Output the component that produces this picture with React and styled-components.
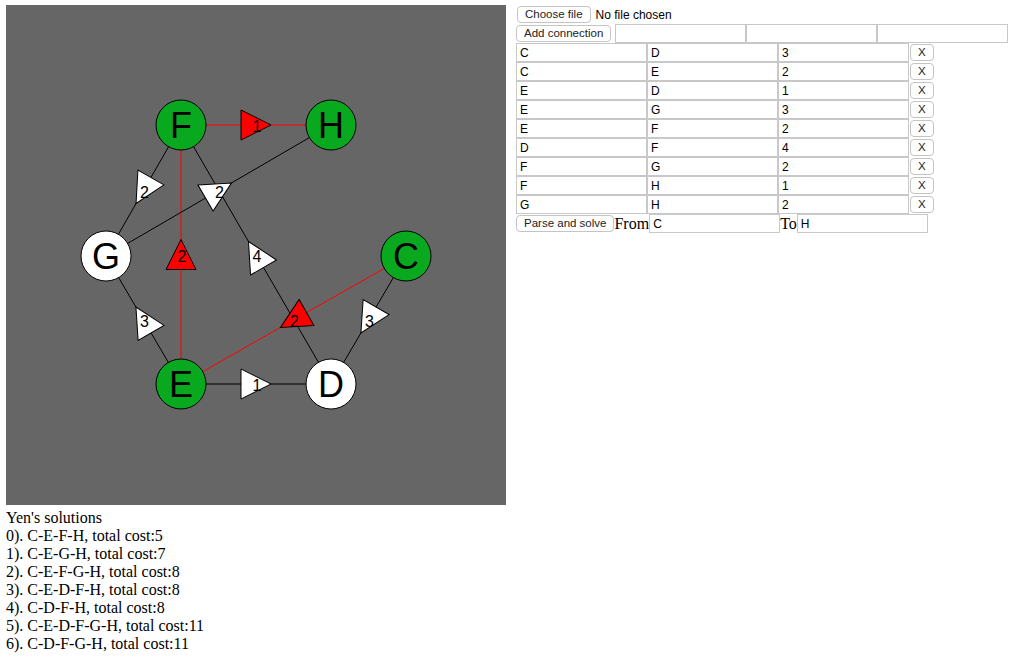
import React from "react";
import styled, { createGlobalStyle } from "styled-components";

const GlobalStyle = createGlobalStyle`
  body {
    margin: 0;
    font-family: "Liberation Serif", "Times New Roman", serif;
    background: #ffffff;
    color: #000000;
  }
`;

const Page = styled.div`
  display: flex;
  align-items: flex-start;
  gap: 10px;
  padding: 5px 6px;
`;

const LeftColumn = styled.div`
  display: flex;
  flex-direction: column;
`;

const GraphBoard = styled.svg`
  display: block;
  width: 500px;
  height: 500px;
  background: #666666;
`;

const Solutions = styled.div`
  margin-top: 4px;
  font-size: 16px;
  line-height: 18px;
`;

const Panel = styled.div`
  display: flex;
  flex-direction: column;
`;

const Row = styled.div`
  display: flex;
  align-items: center;
  height: 19px;
`;

const FileNote = styled.span`
  font-family: "Liberation Sans", Arial, sans-serif;
  font-size: 12px;
  margin-left: 5px;
`;

const Button = styled.button`
  box-sizing: border-box;
  height: 17px;
  padding: 0 7px;
  margin: 0 ${(p) => (p.$gap ? "4px" : "0")} 0 ${(p) => (p.$inset ? "1px" : "0")};
  border: 1px solid #c4c4c4;
  border-radius: 4px;
  background: #ffffff;
  color: #222222;
  font-family: "Liberation Sans", Arial, sans-serif;
  font-size: 11.5px;
  line-height: 15px;
  white-space: nowrap;
`;

const Field = styled.input`
  box-sizing: border-box;
  width: 131px;
  height: 19px;
  margin: 0;
  padding: 0 3px;
  border: 1px solid #c8c8c8;
  font-family: "Liberation Sans", Arial, sans-serif;
  font-size: 12px;
  color: #000000;
  outline: none;
`;

const Caption = styled.span`
  font-size: 16px;
  line-height: 19px;
`;

// positions inside the 500x500 board
const nodes = {
  F: { x: 175, y: 120, on: true },
  H: { x: 325, y: 120, on: true },
  G: { x: 100, y: 251, on: false },
  C: { x: 400, y: 251, on: true },
  E: { x: 175, y: 379, on: true },
  D: { x: 325, y: 379, on: false },
};

const edges = [
  ["C", "D", "3"],
  ["C", "E", "2"],
  ["E", "D", "1"],
  ["E", "G", "3"],
  ["E", "F", "2"],
  ["D", "F", "4"],
  ["F", "G", "2"],
  ["F", "H", "1"],
  ["G", "H", "2"],
];

// edges on the best path
const path = ["C-E", "E-F", "F-H"];
const onPath = (a, b) => path.includes(`${a}-${b}`);

const solutions = [
  "0). C-E-F-H, total cost:5",
  "1). C-E-G-H, total cost:7",
  "2). C-E-F-G-H, total cost:8",
  "3). C-E-D-F-H, total cost:8",
  "4). C-D-F-H, total cost:8",
  "5). C-E-D-F-G-H, total cost:11",
  "6). C-D-F-G-H, total cost:11",
];

const Graph = () => (
  <GraphBoard viewBox="0 0 500 500">
    {edges.map(([a, b]) => (
      <line
        key={`l${a}${b}`}
        x1={nodes[a].x}
        y1={nodes[a].y}
        x2={nodes[b].x}
        y2={nodes[b].y}
        stroke={onPath(a, b) ? "#ff0000" : "#000000"}
        strokeWidth="1"
      />
    ))}
    {edges.map(([a, b, w]) => {
      const mx = (nodes[a].x + nodes[b].x) / 2;
      const my = (nodes[a].y + nodes[b].y) / 2;
      const ang =
        (Math.atan2(nodes[b].y - nodes[a].y, nodes[b].x - nodes[a].x) * 180) /
        Math.PI;
      return (
        <g key={`t${a}${b}`}>
          <polygon
            points="-15,-15 15,0 -15,15"
            transform={`translate(${mx} ${my}) rotate(${ang})`}
            fill={onPath(a, b) ? "#ff0000" : "#ffffff"}
            stroke="#000000"
            strokeWidth="1"
          />
          <text
            x={mx + 1}
            y={my + 7}
            textAnchor="middle"
            fontFamily="Liberation Sans, Arial, sans-serif"
            fontSize="16"
            fill="#000000"
          >
            {w}
          </text>
        </g>
      );
    })}
    {Object.entries(nodes).map(([name, n]) => (
      <g key={name}>
        <circle
          cx={n.x}
          cy={n.y}
          r="25"
          fill={n.on ? "#09a91f" : "#ffffff"}
          stroke="#000000"
          strokeWidth="1"
        />
        <text
          x={n.x}
          y={n.y + 13}
          textAnchor="middle"
          fontFamily="Liberation Sans, Arial, sans-serif"
          fontSize="36"
          fill="#000000"
        >
          {name}
        </text>
      </g>
    ))}
  </GraphBoard>
);

const App = () => (
  <>
    <GlobalStyle />
    <Page>
      <LeftColumn>
        <Graph />
        <Solutions>
          <div>Yen's solutions</div>
          {solutions.map((s) => (
            <div key={s}>{s}</div>
          ))}
        </Solutions>
      </LeftColumn>
      <Panel>
        <Row>
          <Button type="button" $inset>
            Choose file
          </Button>
          <FileNote>No file chosen</FileNote>
        </Row>
        <Row>
          <Button type="button" $gap>
            Add connection
          </Button>
          <Field defaultValue="" />
          <Field defaultValue="" />
          <Field defaultValue="" />
        </Row>
        {edges.map(([a, b, w]) => (
          <Row key={`r${a}${b}`}>
            <Field defaultValue={a} />
            <Field defaultValue={b} />
            <Field defaultValue={w} />
            <Button type="button" $inset>
              X
            </Button>
          </Row>
        ))}
        <Row>
          <Button type="button">Parse and solve</Button>
          <Caption>From</Caption>
          <Field defaultValue="C" />
          <Caption>To</Caption>
          <Field defaultValue="H" />
        </Row>
      </Panel>
    </Page>
  </>
);

export default App;
